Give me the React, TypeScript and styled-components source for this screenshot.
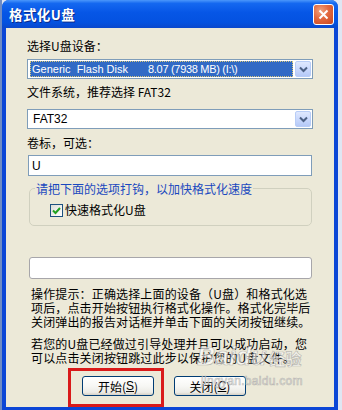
import React from "react";
import styled, { createGlobalStyle } from "styled-components";

const Global = createGlobalStyle`
  html, body { margin: 0; padding: 0; }
  body {
    width: 342px; height: 410px; overflow: hidden;
    background: linear-gradient(90deg, #6f8cc4 0, #6f8cc4 2px, #dfe6f3 2px);
    font-family: "Noto Sans CJK SC", "Liberation Sans", sans-serif;
  }
`;

const CJK = `"Noto Sans CJK SC", "Liberation Sans", sans-serif`;
const LATIN = `"Liberation Sans", "Noto Sans CJK SC", sans-serif`;

const Window = styled.div`
  position: relative;
  margin-left: 2px;
  width: 336px;
  height: 410px;
  background: #0b46d6;
  border-radius: 7px 7px 0 0;
  display: flex;
  flex-direction: column;
  overflow: hidden;
`;

const TitleBar = styled.div`
  height: 28px;
  flex: none;
  display: flex;
  align-items: center;
  padding: 0 4px 0 7px;
  background: linear-gradient(180deg, #4b97fb 0%, #1468f0 12%, #0656e6 45%, #0452e0 80%, #0a48cc 100%);
`;

const Title = styled.div`
  color: #fff;
  font: bold 13.5px ${CJK};
  letter-spacing: 0.4px;
  text-shadow: 1px 1px 0 #0a2a8a;
`;

const CloseBtn = styled.div`
  margin-left: auto;
  width: 19px;
  height: 19px;
  border: 1px solid #fff;
  border-radius: 3px;
  background: radial-gradient(circle at 35% 30%, #f0a27e 0%, #e2683f 45%, #c8461f 100%);
  display: flex;
  align-items: center;
  justify-content: center;
`;

const Body = styled.div`
  flex: 1;
  margin: 0 4px 4px 4px;
  background: #ece9d8;
  padding: 10px 21px 0 21px;
  display: flex;
  flex-direction: column;
  font: 12px ${CJK};
  color: #000;
`;

const Label = styled.div<{ $mt: number }>`
  margin-top: ${(p) => p.$mt}px;
  line-height: 16px;
  height: 16px;
`;

const Combo = styled.div<{ $mt: number }>`
  margin-top: ${(p) => p.$mt}px;
  height: 20px;
  box-sizing: border-box;
  border: 1px solid #7f9db9;
  background: #fff;
  display: flex;
  align-items: center;
  padding: 1px;
`;

const ComboValue = styled.div<{ $selected?: boolean }>`
  flex: 1;
  height: 16px;
  box-sizing: border-box;
  margin-right: 2px;
  display: flex;
  align-items: center;
  padding-left: ${(p) => (p.$selected ? 1 : 3)}px;
  font: ${(p) => (p.$selected ? 11 : 12)}px ${LATIN};
  white-space: pre;
  color: ${(p) => (p.$selected ? "#fff" : "#000")};
  background: ${(p) => (p.$selected ? "#316ac5" : "transparent")};
  border: 1px dotted ${(p) => (p.$selected ? "#d8c87a" : "transparent")};
  margin-left: ${(p) => (p.$selected ? 1 : 0)}px;
`;

const Part = styled.span<{ $ml?: number; $ls?: number }>`
  margin-left: ${(p) => p.$ml || 0}px;
  letter-spacing: ${(p) => p.$ls || 0}px;
`;

const DropBtn = styled.div`
  width: 16px;
  height: 16px;
  box-sizing: border-box;
  border: 1px solid #b8cdf7;
  border-radius: 2px;
  background: linear-gradient(180deg, #dfe8fe 0%, #c6d6fc 60%, #b5c9f7 100%);
  display: flex;
  align-items: center;
  justify-content: center;
`;

const TextBox = styled.div<{ $mt: number; $h: number; $round?: boolean; $ml?: number; $mr?: number }>`
  margin-top: ${(p) => p.$mt}px;
  margin-left: ${(p) => p.$ml || 0}px;
  margin-right: ${(p) => p.$mr || 0}px;
  height: ${(p) => p.$h}px;
  box-sizing: border-box;
  border: 1px solid ${(p) => (p.$round ? "#a7a6aa" : "#7f9db9")};
  border-radius: ${(p) => (p.$round ? 3 : 0)}px;
  background: #fff;
  display: flex;
  align-items: center;
  padding-left: 3px;
  font: 12px ${LATIN};
`;

const Group = styled.fieldset`
  margin: 4px 1px 0 2px;
  padding: 0 5px 7px 5px;
  border: 1px solid #d0d0bf;
  border-radius: 5px;
  min-width: 0;
`;

const Legend = styled.legend`
  padding: 0 1px;
  line-height: 16px;
  color: #1a48bf;
  font: 12px ${CJK};
`;

const CheckRow = styled.label`
  margin: 5px 0 0 15px;
  display: flex;
  align-items: center;
  gap: 2px;
  line-height: 16px;
`;

const CheckBox = styled.span`
  width: 13px;
  height: 13px;
  box-sizing: border-box;
  border: 1px solid #1c5180;
  background: linear-gradient(135deg, #dcdcd7 0%, #f2f2ef 60%, #fff 100%);
  display: flex;
  align-items: center;
  justify-content: center;
`;

const Para = styled.div<{ $mt: number }>`
  margin-top: ${(p) => p.$mt}px;
  padding-left: 4px;
  line-height: 14px;
  letter-spacing: 0.15px;
`;

const Line = styled.div`
  white-space: nowrap;
`;

const ButtonRow = styled.div`
  margin-top: 3px;
  display: flex;
  align-items: flex-start;
  padding-left: 41px;
`;

const Highlight = styled.div`
  border: 3px solid #d91a1a;
  padding: 5px 7px 8px 11px;
`;

const Button = styled.div<{ $ml?: number }>`
  margin-left: ${(p) => p.$ml || 0}px;
  margin-top: ${(p) => (p.$ml ? 8 : 0)}px;
  width: 72px;
  height: 20px;
  box-sizing: border-box;
  border: 1px solid #003c74;
  border-radius: 3px;
  background: linear-gradient(180deg, #fff 0%, #f7f7f4 50%, #ecebe6 85%, #d6d0c5 100%);
  display: flex;
  align-items: center;
  justify-content: center;
  font: 12px ${CJK};
  color: #000;
`;

const U = styled.span`
  text-decoration: underline;
  font-family: ${LATIN};
`;

const Watermark = styled.div`
  position: absolute;
  left: 195px;
  top: 341px;
  pointer-events: none;
  color: rgba(255, 255, 255, 0.6);
  -webkit-text-stroke: 0.7px rgba(130, 130, 130, 0.5);
  display: flex;
  flex-direction: column;
`;

const WmBig = styled.div`
  display: flex;
  align-items: baseline;
  font: bold italic 25px ${LATIN};
  line-height: 30px;
`;

const WmCn = styled.span`
  font: bold 16px ${CJK};
  margin-left: 3px;
`;

const WmSmall = styled.div`
  font: 12px ${LATIN};
  margin-top: 3px;
  margin-left: 4px;
  letter-spacing: 0.3px;
`;

const Chevron = () => (
  <svg width="9" height="7" viewBox="0 0 9 7">
    <path d="M1 1.5 L4.5 5 L8 1.5" stroke="#4d6185" strokeWidth="2" fill="none" />
  </svg>
);

export default function App() {
  return (
    <>
      <Global />
      <Window>
        <TitleBar>
          <Title>格式化U盘</Title>
          <CloseBtn>
            <svg width="11" height="11" viewBox="0 0 11 11">
              <path d="M1.5 1.5 L9.5 9.5 M9.5 1.5 L1.5 9.5" stroke="#fff" strokeWidth="2" />
            </svg>
          </CloseBtn>
        </TitleBar>
        <Body>
          <Label $mt={0}>选择U盘设备：</Label>
          <Combo $mt={5}>
            <ComboValue $selected>
              <Part>Generic  Flash Disk</Part>
              <Part $ml={20} $ls={-0.3}>8.07 (7938 MB) (I:\)</Part>
            </ComboValue>
            <DropBtn>
              <Chevron />
            </DropBtn>
          </Combo>
          <Label $mt={5}>文件系统，推荐选择 FAT32</Label>
          <Combo $mt={9}>
            <ComboValue>FAT32</ComboValue>
            <DropBtn>
              <Chevron />
            </DropBtn>
          </Combo>
          <Label $mt={6}>卷标，可选：</Label>
          <TextBox $mt={4} $h={21} $ml={1} $mr={1}>U</TextBox>
          <Group>
            <Legend>请把下面的选项打钩，以加快格式化速度</Legend>
            <CheckRow>
              <CheckBox>
                <svg width="9" height="9" viewBox="0 0 9 9">
                  <path d="M1 4.5 L3.5 7 L8 2" stroke="#21a121" strokeWidth="2" fill="none" />
                </svg>
              </CheckBox>
              快速格式化U盘
            </CheckRow>
          </Group>
          <TextBox $mt={31} $h={22} $round $ml={2} $mr={1} />
          <Para $mt={8}>
            <Line>操作提示：正确选择上面的设备（U盘）和格式化选</Line>
            <Line>项后，点击开始按钮执行格式化操作。格式化完毕后</Line>
            <Line>关闭弹出的报告对话框并单击下面的关闭按钮继续。</Line>
          </Para>
          <Para $mt={8}>
            <Line>若您的U盘已经做过引导处理并且可以成功启动，您</Line>
            <Line>可以点击关闭按钮跳过此步以保护您的U盘文件。</Line>
          </Para>
          <ButtonRow>
            <Highlight>
              <Button>
                开始(<U>S</U>)
              </Button>
            </Highlight>
            <Button $ml={10}>
              关闭(<U>C</U>)
            </Button>
          </ButtonRow>
        </Body>
        <Watermark>
          <WmBig>
            Baidu<WmCn>经验</WmCn>
          </WmBig>
          <WmSmall>jingyan.baidu.com</WmSmall>
        </Watermark>
      </Window>
    </>
  );
}
